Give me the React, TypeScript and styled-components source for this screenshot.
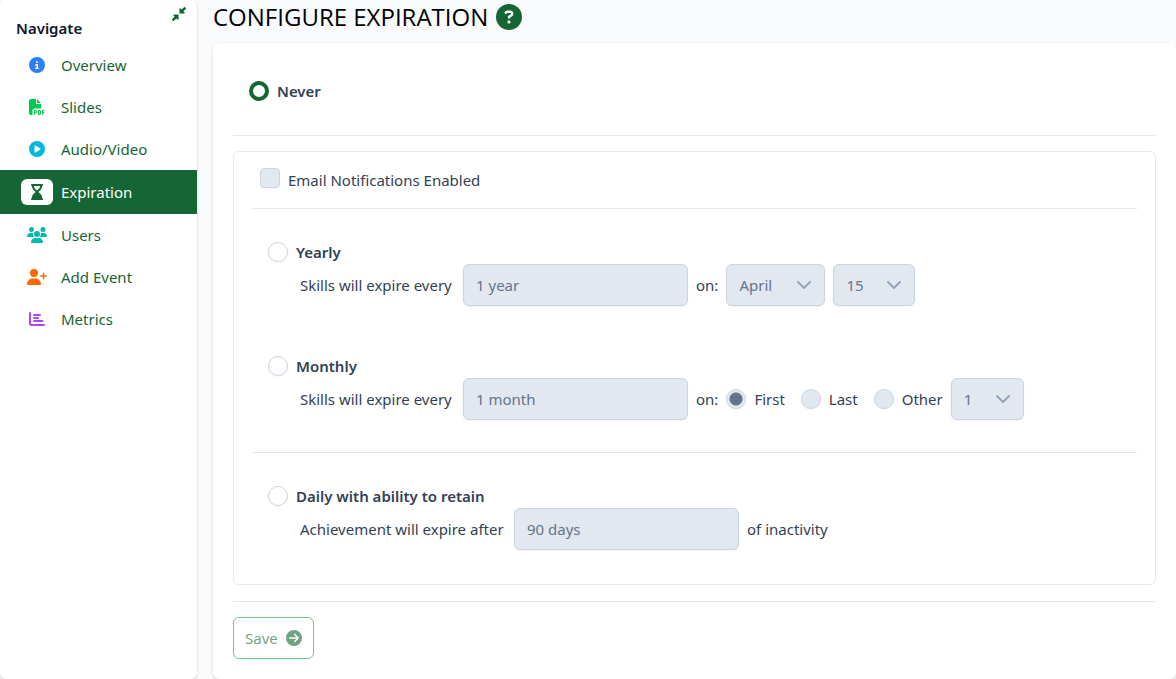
import React from 'react';
import styled, { createGlobalStyle, css } from 'styled-components';
import {
  FaCircleInfo, FaFilePdf, FaCirclePlay, FaHourglassEnd, FaUsers, FaUserPlus,
  FaCircleQuestion, FaCircleArrowRight, FaDownLeftAndUpRightToCenter,
} from 'react-icons/fa6';

const GlobalStyle = createGlobalStyle`
  *, *::before, *::after { box-sizing: border-box; }
  body {
    margin: 0;
    background: #f8fafc;
    color: #334155;
    font-family: "Noto Sans", "Open Sans", sans-serif;
    font-size: 15px;
    line-height: 24px;
  }
  button, input, select { font: inherit; }
`;

const Layout = styled.div`
  display: grid;
  grid-template-columns: 197px minmax(0, 1fr);
  gap: 16px;
  min-height: 100vh;
`;

const surface = css`
  background: #fff;
  border-radius: 6px;
  box-shadow: 0 1px 3px rgba(0, 0, 0, 0.1), 0 1px 2px rgba(0, 0, 0, 0.1);
`;

const Sidebar = styled.aside`
  ${surface}
`;

const SidebarHead = styled.div`
  display: flex;
  justify-content: space-between;
  align-items: flex-start;
  height: 44px;
  padding: 7px 11px 0 16px;
`;

const SidebarTitle = styled.h2`
  margin: 9px 0 0;
  font-size: 15px;
  font-weight: 600;
  color: #0f172a;
`;

const CollapseButton = styled.button`
  display: flex;
  padding: 0;
  border: 0;
  background: none;
  color: #166534;
  font-size: 14px;
`;

const NavList = styled.ul`
  margin: 0;
  padding: 0;
  list-style: none;
`;

const NavLink = styled.a<{ $active?: boolean }>`
  display: flex;
  align-items: center;
  gap: 8px;
  height: ${p => (p.$active ? 44 : 42)}px;
  padding: 0 21px;
  color: ${p => (p.$active ? '#fff' : '#166534')};
  background: ${p => (p.$active ? '#166534' : 'transparent')};
  text-decoration: none;
`;

const NavIcon = styled.span<{ $color: string; $active?: boolean }>`
  display: flex;
  align-items: center;
  justify-content: center;
  width: 32px;
  height: 26px;
  border-radius: 6px;
  font-size: 16px;
  color: ${p => p.$color};
  background: ${p => (p.$active ? '#fff' : 'transparent')};
`;

const Main = styled.main`
  display: flex;
  flex-direction: column;
`;

const PageHeader = styled.header`
  display: flex;
  align-items: center;
  gap: 8px;
  height: 43px;
  padding-bottom: 9px;
`;

const PageTitle = styled.h1`
  margin: 0;
  font-family: "Open Sans", "Noto Sans", sans-serif;
  font-size: 24px;
  line-height: 32px;
  font-weight: 400;
  color: #000;
  text-transform: uppercase;
`;

const HelpLink = styled.a`
  display: flex;
  color: #166534;
  font-size: 26px;
`;

const Card = styled.form`
  ${surface}
  flex: 1;
  padding: 36px 20px 20px;
`;

const Rule = styled.hr<{ $above: number; $below: number }>`
  height: 1px;
  margin: ${p => p.$above}px 0 ${p => p.$below}px;
  border: 0;
  background: #e2e8f0;
`;

const Panel = styled.section`
  padding: 16px 18px 34px;
  border: 1px solid #e2e8f0;
  border-radius: 6px;
`;

const ChoiceLabel = styled.label<{ $bold?: boolean; $indent?: number }>`
  display: flex;
  align-items: center;
  gap: 8px;
  height: 24px;
  padding-left: ${p => p.$indent ?? 0}px;
  font-weight: ${p => (p.$bold ? 600 : 400)};
`;

const Radio = styled.input.attrs({ type: 'radio' })`
  appearance: none;
  flex: none;
  width: 20px;
  height: 20px;
  margin: 0;
  border: 1px solid #cbd5e1;
  border-radius: 50%;
  background: #fff;
  box-shadow: 0 1px 2px rgba(18, 18, 23, 0.05);

  &:checked {
    border: 4px solid #166534;
  }
  &:disabled {
    border: 1px solid #cbd5e1;
    background: #e2e8f0;
  }
  &:disabled:checked {
    background: radial-gradient(circle, #64748b 6px, #e2e8f0 7px);
  }
`;

const Checkbox = styled.input.attrs({ type: 'checkbox' })`
  appearance: none;
  flex: none;
  align-self: flex-start;
  width: 20px;
  height: 20px;
  margin: 0;
  border: 1px solid #cbd5e1;
  border-radius: 4px;
  background: #e2e8f0;
  box-shadow: 0 1px 2px rgba(18, 18, 23, 0.05);
`;

const Choice = styled.div`
  padding-left: 16px;
  & + & { margin-top: 48px; }
`;

const FieldRow = styled.div`
  display: flex;
  align-items: center;
  gap: 8px;
  padding-left: 32px;
`;

const FieldLabel = styled.label<{ $width: number }>`
  min-width: ${p => p.$width}px;
`;

const control = css`
  height: 42px;
  border: 1px solid #cbd5e1;
  border-radius: 6px;
  background: #e2e8f0;
  color: #64748b;
  opacity: 1;
  box-shadow: 0 1px 2px rgba(18, 18, 23, 0.05);
`;

const TextInput = styled.input`
  ${control}
  width: 225px;
  padding: 0 12px;
`;

const SelectWrap = styled.span<{ $width: number }>`
  display: grid;
  align-items: center;
  width: ${p => p.$width}px;
  & > * { grid-area: 1 / 1; }
  & > svg { justify-self: end; margin-right: 14px; pointer-events: none; }
`;

const Select = styled.select`
  ${control}
  appearance: none;
  width: 100%;
  padding: 0 12px;
`;

const RadioGroup = styled.div`
  display: flex;
  gap: 16px;
`;

const SaveButton = styled.button`
  display: flex;
  align-items: center;
  gap: 8px;
  height: 42px;
  padding: 0 11px;
  border: 1px solid #16a34a;
  border-radius: 6px;
  background: transparent;
  color: #166534;
  opacity: 0.6;

  svg { font-size: 16px; }
`;

function MetricsIcon() {
  return (
    <svg width="16" height="16" viewBox="0 0 16 16" fill="none" stroke="currentColor" strokeWidth="2" strokeLinecap="round" strokeLinejoin="round" aria-hidden="true">
      <path d="M1 2v10.500c0 .8.7 1.500 1.500 1.500H15" />
      <path d="M5 4h6M5 7h4M5 10h8.500" strokeWidth="1.900" />
    </svg>
  );
}

interface DropdownProps { label: string; value: string; width: number }

function Dropdown({ label, value, width }: DropdownProps) {
  return (
    <SelectWrap $width={width}>
      <Select aria-label={label} defaultValue={value} disabled>
        <option>{value}</option>
      </Select>
      <svg width="14" height="14" viewBox="0 0 14 14" fill="none" stroke="#94a3b8" strokeWidth="1.900" strokeLinecap="round" strokeLinejoin="round" aria-hidden="true">
        <path d="M1 4l6 6 6-6" />
      </svg>
    </SelectWrap>
  );
}

const navItems = [
  { label: 'Overview', icon: <FaCircleInfo />, color: '#2b7fff' },
  { label: 'Slides', icon: <FaFilePdf />, color: '#00c951' },
  { label: 'Audio/Video', icon: <FaCirclePlay />, color: '#00b8db' },
  { label: 'Expiration', icon: <FaHourglassEnd />, color: '#166534', active: true },
  { label: 'Users', icon: <FaUsers size={20} />, color: '#00bba7' },
  { label: 'Add Event', icon: <FaUserPlus size={20} />, color: '#ff6900' },
  { label: 'Metrics', icon: <MetricsIcon />, color: '#ad46ff' },
];

export default function App() {
  return (
    <>
      <GlobalStyle />
      <Layout>
        <Sidebar>
          <SidebarHead>
            <SidebarTitle>Navigate</SidebarTitle>
            <CollapseButton type="button" aria-label="Collapse navigation">
              <FaDownLeftAndUpRightToCenter />
            </CollapseButton>
          </SidebarHead>
          <nav>
            <NavList>
              {navItems.map(item => (
                <li key={item.label}>
                  <NavLink href="#" $active={item.active} aria-current={item.active ? 'page' : undefined}>
                    <NavIcon $color={item.color} $active={item.active}>{item.icon}</NavIcon>
                    {item.label}
                  </NavLink>
                </li>
              ))}
            </NavList>
          </nav>
        </Sidebar>
        <Main>
          <PageHeader>
            <PageTitle>Configure Expiration</PageTitle>
            <HelpLink href="#" aria-label="Help"><FaCircleQuestion /></HelpLink>
          </PageHeader>
          <Card>
            <ChoiceLabel $bold $indent={16}>
              <Radio name="expiration" defaultChecked />
              Never
            </ChoiceLabel>
            <Rule $above={32} $below={15} />
            <Panel>
              <ChoiceLabel $indent={8}>
                <Checkbox disabled />
                Email Notifications Enabled
              </ChoiceLabel>
              <Rule $above={16} $below={31} />
              <Choice>
                <ChoiceLabel $bold>
                  <Radio name="expiration" />
                  Yearly
                </ChoiceLabel>
                <FieldRow>
                  <FieldLabel htmlFor="years" $width={155}>Skills will expire every</FieldLabel>
                  <TextInput id="years" defaultValue="1 year" disabled />
                  <span>on:</span>
                  <Dropdown label="Month" value="April" width={99} />
                  <Dropdown label="Day of month" value="15" width={82} />
                </FieldRow>
              </Choice>
              <Choice>
                <ChoiceLabel $bold>
                  <Radio name="expiration" />
                  Monthly
                </ChoiceLabel>
                <FieldRow>
                  <FieldLabel htmlFor="months" $width={155}>Skills will expire every</FieldLabel>
                  <TextInput id="months" defaultValue="1 month" disabled />
                  <span>on:</span>
                  <RadioGroup>
                    <ChoiceLabel><Radio name="monthDay" defaultChecked disabled />First</ChoiceLabel>
                    <ChoiceLabel><Radio name="monthDay" disabled />Last</ChoiceLabel>
                    <ChoiceLabel><Radio name="monthDay" disabled />Other</ChoiceLabel>
                  </RadioGroup>
                  <Dropdown label="Other day" value="1" width={73} />
                </FieldRow>
              </Choice>
              <Rule $above={32} $below={31} />
              <Choice>
                <ChoiceLabel $bold>
                  <Radio name="expiration" />
                  Daily with ability to retain
                </ChoiceLabel>
                <FieldRow>
                  <FieldLabel htmlFor="days" $width={206}>Achievement will expire after</FieldLabel>
                  <TextInput id="days" defaultValue="90 days" disabled />
                  <span>of inactivity</span>
                </FieldRow>
              </Choice>
            </Panel>
            <Rule $above={16} $below={15} />
            <SaveButton type="submit" disabled>
              Save
              <FaCircleArrowRight />
            </SaveButton>
          </Card>
        </Main>
      </Layout>
    </>
  );
}
